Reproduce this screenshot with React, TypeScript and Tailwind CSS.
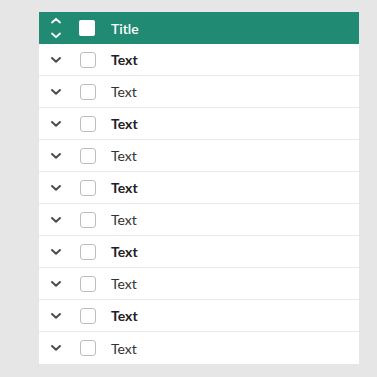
import React from "react";

const Chevron = () => (
  <svg width="12" height="8" viewBox="0 0 12 8" fill="none">
    <path d="M2 2 L6 5.8 L10 2" stroke="#4a4a4a" strokeWidth="1.9" strokeLinecap="round" strokeLinejoin="round" />
  </svg>
);

const SortIcon = () => (
  <svg width="12" height="22" viewBox="0 0 12 22" fill="none">
    <path d="M2 5.5 L6 1.8 L10 5.5" stroke="#ffffff" strokeWidth="1.8" strokeLinecap="round" strokeLinejoin="round" />
    <path d="M2 16.5 L6 20.2 L10 16.5" stroke="#ffffff" strokeWidth="1.8" strokeLinecap="round" strokeLinejoin="round" />
  </svg>
);

export default function App() {
  const rows = Array.from({ length: 10 }, (_, i) => i);
  return (
    <div
      className="w-[377px] h-[377px] bg-[#e6e6e6] pl-[39px] pt-[12px]"
      style={{ fontFamily: "Lato, 'Open Sans', sans-serif" }}
    >
      <div className="w-[320px] bg-white">
        <div className="h-[32px] bg-[#218a72] flex items-center">
          <div className="w-[34px] flex justify-center">
            <SortIcon />
          </div>
          <div className="ml-[6px] w-[16px] h-[16px] bg-white rounded-[2px]" />
          <div className="ml-[16px] text-[14px] font-semibold text-white">Title</div>
        </div>
        {rows.map((i) => (
          <div
            key={i}
            className={`h-[32px] flex items-center ${i < 9 ? "border-b border-[#e9e9e9]" : ""}`}
          >
            <div className="w-[34px] flex justify-center">
              <Chevron />
            </div>
            <div className="ml-[7px] w-[16px] h-[16px] rounded-[3px] border border-[#bdbdbd] bg-white" />
            <div
              className={`ml-[15px] text-[14px] ${i % 2 === 0 ? "font-bold text-[#222]" : "font-normal text-[#333]"}`}
            >
              Text
            </div>
          </div>
        ))}
      </div>
    </div>
  );
}
